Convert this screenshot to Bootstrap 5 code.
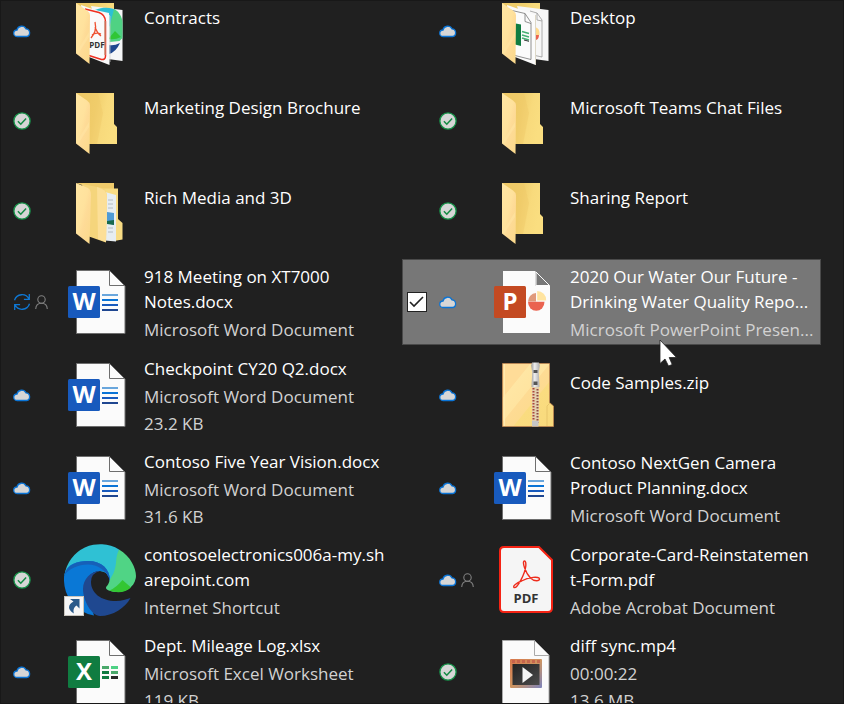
<!DOCTYPE html>
<html lang="en" data-bs-theme="dark">
<head>
<meta charset="utf-8">
<meta name="viewport" content="width=device-width, initial-scale=1">
<title>Files</title>
<link href="https://cdn.jsdelivr.net/npm/bootstrap@5.3.0/dist/css/bootstrap.min.css" rel="stylesheet">
<style>
  body { background: #202020; color: #fff; font-family: "Open Sans", "Noto Sans", sans-serif; font-size: 17px; line-height: 25px; }
  .explorer { border: 1px solid #181818; }
  .tiles { display: grid; grid-template-columns: repeat(2, minmax(0, 1fr)); gap: 7px; margin: -12px 22px 0 -25px; }
  .tile { min-height: 86px; padding-right: 8px; border: 1px solid transparent; }
  .tile.folder { min-height: 83px; }
  .tile.tight { min-height: 84px; }
  .tile.selected { background: #777; border-color: #4a4a4a; }
  .pick { width: 36px; padding-left: 4px; flex-shrink: 0; }
  .pick .form-check-input { width: 20px; height: 20px; margin: 0; border: 1px solid #222; border-radius: 0; background-color: #fff; background-size: 20px 20px;
    background-image: url("data:image/svg+xml,%3csvg xmlns='http://www.w3.org/2000/svg' viewBox='0 0 20 20'%3e%3cpath fill='none' stroke='%23222' stroke-width='1.6' d='M3 10l4 4 9-9'/%3e%3c/svg%3e"); }
  .state { width: 51px; gap: 4px; flex-shrink: 0; }
  .thumb { width: 72px; height: 72px; }
  .label { padding: 2px 0 0 8px; min-height: 55px; }
  .meta { color: #d2d2d2; margin-top: 3px; }
  .meta + .meta { margin-top: 2px; }
  .pointer { left: 256px; top: 79px; z-index: 2; }
  .letter { font-size: 24px; font-weight: 700; fill: #fff; text-anchor: middle; }
  .stamp { font-size: 13px; font-weight: 700; fill: #333; text-anchor: middle; }
  .stamp-sm { font-size: 8px; font-weight: 700; fill: #333; text-anchor: middle; }
</style>
<script src="https://cdn.jsdelivr.net/npm/bootstrap@5.3.0/dist/js/bootstrap.bundle.min.js"></script>
</head>
<body>
<svg width="0" height="0" class="position-absolute" aria-hidden="true">
  <defs>
    <linearGradient id="gBack" x1="0" y1="0" x2="1" y2=".25"><stop offset="0" stop-color="#ecc866"/><stop offset=".5" stop-color="#f1cf6d"/><stop offset=".75" stop-color="#f8da7c"/><stop offset="1" stop-color="#fade80"/></linearGradient>
    <linearGradient id="gFlap" x1="0" y1="0" x2="1" y2="1"><stop offset="0" stop-color="#ffe6a2"/><stop offset=".45" stop-color="#ffe29d"/><stop offset=".6" stop-color="#fedb97"/><stop offset="1" stop-color="#fbd98a"/></linearGradient>
    <linearGradient id="gZip" x1="0" y1="0" x2="1" y2="1"><stop offset="0" stop-color="#ffdc98"/><stop offset=".27" stop-color="#ffdc98"/><stop offset=".28" stop-color="#ffe6a4"/><stop offset=".46" stop-color="#ffe4a0"/><stop offset=".47" stop-color="#fedb94"/><stop offset=".6" stop-color="#fddb90"/><stop offset=".61" stop-color="#fadc80"/><stop offset="1" stop-color="#f8da7c"/></linearGradient>
    <linearGradient id="gPull" x1="0" x2="1"><stop offset="0" stop-color="#999"/><stop offset=".4" stop-color="#eee"/><stop offset="1" stop-color="#aaa"/></linearGradient>
    <linearGradient id="gFilm" x1="0" y1="0" x2="1" y2="1"><stop offset="0" stop-color="#d8774c"/><stop offset=".5" stop-color="#cf9560"/><stop offset="1" stop-color="#7d84bd"/></linearGradient>
    <linearGradient id="gDark" x1="0" y1="0" x2="1" y2="1"><stop offset="0" stop-color="#222"/><stop offset="1" stop-color="#4b4b4b"/></linearGradient>
  </defs>
  <symbol id="cloud" viewBox="0 0 18 14"><path d="M4 12.500A3.250 3.250 0 0 1 4 6A4.800 4.800 0 0 1 13 4.900A3.850 3.850 0 0 1 13.600 12.500z" fill="#d6d6d6" stroke="#0a74d6" stroke-width="1.300"/></symbol>
  <symbol id="check" viewBox="0 0 18 18"><circle cx="9" cy="9" r="8.100" fill="#d6d6d6" stroke="#16954a" stroke-width="1.300"/><path d="M4.900 9.300l2.900 2.900 5.300-5.600" fill="none" stroke="#128a43" stroke-width="1.500"/></symbol>
  <symbol id="sync" viewBox="0 0 18 18"><path d="M1.500 7.200A7.800 7.800 0 0 1 16 6.200M16.300 1v5.400h-5.400M16.500 10.800A7.800 7.800 0 0 1 2 11.800M1.700 17v-5.400h5.400" fill="none" stroke="#0f78d4" stroke-width="1.300"/></symbol>
  <symbol id="person" viewBox="0 0 13 14"><circle cx="6.500" cy="4.500" r="3.700" fill="none" stroke="#808080" stroke-width="1.100"/><path d="M.7 14c.2-3.600 2.400-5.800 5.800-5.800s5.600 2.200 5.800 5.800" fill="none" stroke="#808080" stroke-width="1.100"/></symbol>
  <symbol id="page" viewBox="0 0 72 72"><path d="M12.500 4.500h33L61 20v47.500H12.500z" fill="#fbfbfb" stroke="#6e6e6e"/><path d="M45.500 4.500v15H61" fill="none" stroke="#6e6e6e"/></symbol>
  <symbol id="word" viewBox="0 0 72 72"><use href="#page"/><path d="M38 29h16" stroke="#69a6dc" stroke-width="2"/><path d="M38 34h16" stroke="#0a74d6" stroke-width="2"/><path d="M38 39h16" stroke="#185abd" stroke-width="2"/><path d="M38 44h16" stroke="#1f4690" stroke-width="2"/><rect x="4" y="20" width="32" height="32" rx="1.500" fill="#185abd"/></symbol>
  <symbol id="excel" viewBox="0 0 72 72"><use href="#page"/><path d="M38 31.500h7M47 36.500h7" stroke="#4aa96b" stroke-width="3"/><path d="M47 31.500h7" stroke="#4dd184" stroke-width="3"/><path d="M38 36.500h7M38 41.500h7" stroke="#107c41" stroke-width="3"/><path d="M47 41.500h7" stroke="#292929" stroke-width="3"/><rect x="4" y="20" width="32" height="32" rx="1.500" fill="#107c41"/></symbol>
  <symbol id="ppt" viewBox="0 0 72 72"><path d="M13 5h32.500v14.500H60V67H13z" fill="#fbfbfb"/><path d="M46 6v13.500h13.500z" fill="#777" stroke="#fbfbfb"/><path d="M46 35.500h-8a8.500 8.500 0 0 1 8-8.500z" fill="#e09a7c"/><path d="M38 35.800h16.500a8.200 9 0 0 1-16.500 0z" fill="#ea6350"/><path d="M47.200 34.500V25a9 9 0 0 1 9 9.500z" fill="#ffe4a0"/><rect x="4" y="20" width="32" height="32" rx="1.500" fill="#c44a22"/></symbol>
  <symbol id="backing" viewBox="0 0 72 72"><path d="M12 8h38v31l3 3v17H25z" fill="url(#gBack)"/></symbol>
  <symbol id="flap" viewBox="0 0 72 72"><path d="M12 8l11 7.500q3 2 3 5L25.500 69 12 58.500z" fill="url(#gFlap)"/><path d="M13 56l12-19v5L14 59z" fill="#ffe4a4" opacity=".6"/></symbol>
  <symbol id="folder" viewBox="0 0 72 72"><use href="#backing"/><path d="M14 8h20l5 20-6 31h-7V18z" fill="#edc765" opacity=".35"/><use href="#flap"/></symbol>
  <symbol id="contracts" viewBox="0 0 72 72"><use href="#backing"/>
    <path d="M27 11l31.500 4v51L44 64z" fill="#f5f6f7"/>
    <path d="M31 15c9-4 18-2 21 0l-3 12-4 5V18z" fill="#2cc0d6"/><path d="M50 14c5 2 8 8 8.500 13v16l-3 3-10 1V32z" fill="#4fd283"/><path d="M45 43l6-7 6 6q-6 3-12 2z" fill="#30c636"/><path d="M45 50q5 1 11-2-4 9-11 11z" fill="#1e488f"/>
    <path d="M17 10l28.500 10v50L25 62z" fill="#fafafa"/><path d="M46 21v46" stroke="#ccc" stroke-width=".7"/>
    <path d="M21 14l14 3.500q6 2 6.500 9V61q0 4-4 3.500L25 60.500" fill="none" stroke="#ef2f20" stroke-width="1.500"/><path d="M41 26v34" stroke="#c88b70" stroke-width="1.300"/>
    <path d="M31 27c2 8-1 12-4 16M31 32q2 6 6 9M28 40q4-3 9-1" fill="none" stroke="#ee5030" stroke-width="1.300"/><use href="#flap"/></symbol>
  <symbol id="desktop" viewBox="0 0 72 72"><use href="#backing"/>
    <path d="M27 11l31.500 4v51L44 64z" fill="#f7f7f7"/><path d="M40 16l7 2 5 7v37l-7-1.500M47 18v7l5 1" fill="none" stroke="#999" stroke-width=".8"/><path d="M45 32q5 1 4.500 8H45z" fill="#ffd98b"/><path d="M45 40h4q0 5-4 5z" fill="#ea6350"/>
    <path d="M17 10l28.500 10v50L25 62z" fill="#fbfbfb"/><path d="M45.500 20v50" stroke="#ddd8c8"/><path d="M20 15l15 3.500 6 9v37L25 60.500M35 18.500v8l6 2" fill="none" stroke="#777" stroke-width=".8"/><path d="M23 28l8 1.500V51l-8-2z" fill="#107c41"/><path d="M32 36.500l7 2M32 40l7 2M32 43l7 2" stroke="#45b073" stroke-width="1.600"/><path d="M34 45l5 1.300" stroke="#333"/><use href="#flap"/></symbol>
  <symbol id="media" viewBox="0 0 72 72"><path d="M12 8h38v6H30z" fill="#f0cb6b"/><path d="M34 13.500h20V44l4.500 4v16.500L50 66V25z" fill="#f8dc84"/><path d="M41 17l11 3v46.500l-11-1z" fill="#e6edf2"/><path d="M44 25h5M44 29h5M44 33h5M44 53h5M44 57h5" stroke="#aeb7bd" stroke-width=".9"/><path d="M43 37l7 1v12l-7-2z" fill="#4f9bd6"/><path d="M43 46l7-1v5l-7-1z" fill="#18694d"/>
    <path d="M18 9l20 4q5 2 5 9l-1 45.500-17-6z" fill="#f5d57c"/><path d="M33 12l5 2q5 2 5 9l-1 44-8-3z" fill="#fcdf97"/><path d="M12 8l12 5q3 2 3 7l-1.500 49L12 58.500z" fill="url(#gFlap)"/></symbol>
  <symbol id="zip" viewBox="0 0 72 72"><path d="M12.500 4.500h47v39l4 3.500v20.500h-51z" fill="url(#gZip)" stroke="#c98a52" stroke-width=".7"/><path d="M14.500 5v62" stroke="#ffe9b0"/><path d="M57 67V47l3-3" fill="none" stroke="#e3c067" stroke-width=".8"/>
    <path d="M42 28h7v36h-7z" fill="#e2cfae"/><path d="M43.500 29v34" stroke="#a94438" stroke-width="2" stroke-dasharray="1.500 1.500"/><path d="M47.500 30v34" stroke="#8f4b43" stroke-width="2" stroke-dasharray="1.500 1.500"/>
    <path d="M42 3.500h7l.8 3-1 7 .7 14.500h-8l.7-14.500-1-7z" fill="url(#gPull)"/><path d="M43.500 11h4v3h-4zM43.500 22.500h4V26h-4z" fill="#555"/><path d="M42 62h6.500v5.500H42z" fill="#c6c6c6"/></symbol>
  <symbol id="edge" viewBox="0 0 72 72"><path d="M.5 31A36 36 0 0 1 55 5.500L54 26 46 37Q44 27 36 27L18 20z" fill="#2fc1d4"/>
    <path d="M55 5.500C68 13 73 27 71.800 34 70 44 61 48 53 48c-5 0-11-2-11-4 0-2 3-3 3.500-8 3.500-5 5.500-9 6.500-17 .5-6 1-9 3-13.500z" fill="#50d485"/><path d="M45.500 46.500q7-3 13-10.500l8.500 7.500c-5 5-14 6-21.500 3z" fill="#33c633"/>
    <path d="M0 35C0 19 15 17 24 17c14 0 22 8 22 20-1-7-5-10-10-10-10 0-14 9-14 17l8 27.500A36 36 0 0 1 0 35z" fill="#0a78d6"/><path d="M.5 31C3 20 14 17 24 17c14 0 22 8 22 20C43 26 33 20.500 24 20.500 14 20.500 5 25 .5 31z" fill="#1660b8"/>
    <path d="M36 27q-9 2-9 11c0 11 10 19 25 19 6 0 10-2 14.500-3C61 64 49 72 36 72c-8 0-17-15-17-27 0-10 8-18 17-18z" fill="#1f4890"/>
    <rect x=".5" y="52.500" width="19" height="19" fill="#f6f6f6" stroke="#c8c4bc"/><path d="M6 55h9.500v9.500l-3-3c-3 2-3.500 5-2.500 8-7-4-6-9-.5-12z" fill="#2a5a8a"/></symbol>
  <symbol id="pdf" viewBox="0 0 72 72"><path d="M14 3h35l13 13v48q0 4-4 4H14q-4 0-4-4V7q0-4 4-4z" fill="#f5f5f5" stroke="#f52314" stroke-width="2"/>
    <path d="M34.500 17c-3 0 1 12 6 17 4 4 9 3 9 1 0-3-11-2-18 2-5 2-9 5-7.500 6.500C27 45 35 30 35.800 22c.3-3-.2-5-1.300-5z" fill="none" stroke="#ee2c1c" stroke-width="1.400"/></symbol>
  <symbol id="video" viewBox="0 0 72 72"><path d="M12.500 4.500h32L59 19v48.500H12.500z" fill="#fbfbfb" stroke="#aaa"/><path d="M44.500 4.500V19.500H59" fill="none" stroke="#aaa"/><rect x="20" y="23" width="32" height="29" rx="1" fill="url(#gFilm)"/><path d="M22 25.500h29" stroke="#c2584a" stroke-width="3" stroke-dasharray="3 2" opacity=".7"/><rect x="22.500" y="28" width="27" height="21" fill="url(#gDark)"/><path d="M32.500 31l10.500 8-10.500 8z" fill="#f5f5f5"/></symbol>
</svg>

<main class="explorer vh-100 overflow-hidden">
<ul class="tiles list-unstyled">
  <li class="tile folder d-flex align-items-center"><div class="pick"></div><div class="state d-flex align-items-center"><svg width="18" height="14"><use href="#cloud"/></svg></div><svg class="thumb flex-shrink-0"><use href="#contracts"/><text class="stamp-sm" x="33" y="53">PDF</text></svg><div class="label text-nowrap"><div>Contracts</div></div></li>
  <li class="tile folder d-flex align-items-center"><div class="pick"></div><div class="state d-flex align-items-center"><svg width="18" height="14"><use href="#cloud"/></svg></div><svg class="thumb flex-shrink-0"><use href="#desktop"/></svg><div class="label text-nowrap"><div>Desktop</div></div></li>
  <li class="tile folder d-flex align-items-center"><div class="pick"></div><div class="state d-flex align-items-center"><svg width="18" height="18"><use href="#check"/></svg></div><svg class="thumb flex-shrink-0"><use href="#folder"/></svg><div class="label text-nowrap"><div>Marketing Design Brochure</div></div></li>
  <li class="tile folder d-flex align-items-center"><div class="pick"></div><div class="state d-flex align-items-center"><svg width="18" height="18"><use href="#check"/></svg></div><svg class="thumb flex-shrink-0"><use href="#folder"/></svg><div class="label text-nowrap"><div>Microsoft Teams Chat Files</div></div></li>
  <li class="tile folder d-flex align-items-center"><div class="pick"></div><div class="state d-flex align-items-center"><svg width="18" height="18"><use href="#check"/></svg></div><svg class="thumb flex-shrink-0"><use href="#media"/></svg><div class="label text-nowrap"><div>Rich Media and 3D</div></div></li>
  <li class="tile folder d-flex align-items-center"><div class="pick"></div><div class="state d-flex align-items-center"><svg width="18" height="18"><use href="#check"/></svg></div><svg class="thumb flex-shrink-0"><use href="#folder"/></svg><div class="label text-nowrap"><div>Sharing Report</div></div></li>

  <li class="tile d-flex align-items-center"><div class="pick"></div><div class="state d-flex align-items-center"><svg width="18" height="18"><use href="#sync"/></svg><svg width="13" height="14"><use href="#person"/></svg></div><svg class="thumb flex-shrink-0"><use href="#word"/><text class="letter" x="20" y="44">W</text></svg><div class="label text-nowrap"><div>918 Meeting on XT7000<br>Notes.docx</div><div class="meta">Microsoft Word Document</div></div></li>
  <li class="tile selected d-flex align-items-center position-relative"><div class="pick d-flex"><input class="form-check-input" type="checkbox" checked aria-label="Select 2020 Our Water Our Future"></div><div class="state d-flex align-items-center"><svg width="18" height="14"><use href="#cloud"/></svg></div><svg class="thumb flex-shrink-0"><use href="#ppt"/><text class="letter" x="20" y="44">P</text></svg><div class="label text-nowrap"><div>2020 Our Water Our Future -<br>Drinking Water Quality Repo...</div><div class="meta">Microsoft PowerPoint Presen...</div></div>
    <svg class="pointer position-absolute" width="19" height="28" viewBox="-1 -1 19 28" aria-hidden="true"><path d="M0 0v23.500l5-4.500 3.500 7 3.700-1.500-3-7h7.300z" fill="#fff" stroke="#222" stroke-width=".8"/></svg></li>
  <li class="tile d-flex align-items-center"><div class="pick"></div><div class="state d-flex align-items-center"><svg width="18" height="14"><use href="#cloud"/></svg></div><svg class="thumb flex-shrink-0"><use href="#word"/><text class="letter" x="20" y="44">W</text></svg><div class="label text-nowrap"><div>Checkpoint CY20 Q2.docx</div><div class="meta">Microsoft Word Document</div><div class="meta">23.2 KB</div></div></li>
  <li class="tile d-flex align-items-center"><div class="pick"></div><div class="state d-flex align-items-center"><svg width="18" height="14"><use href="#cloud"/></svg></div><svg class="thumb flex-shrink-0"><use href="#zip"/></svg><div class="label text-nowrap"><div>Code Samples.zip</div></div></li>
  <li class="tile d-flex align-items-center"><div class="pick"></div><div class="state d-flex align-items-center"><svg width="18" height="14"><use href="#cloud"/></svg></div><svg class="thumb flex-shrink-0"><use href="#word"/><text class="letter" x="20" y="44">W</text></svg><div class="label text-nowrap"><div>Contoso Five Year Vision.docx</div><div class="meta">Microsoft Word Document</div><div class="meta">31.6 KB</div></div></li>
  <li class="tile d-flex align-items-center"><div class="pick"></div><div class="state d-flex align-items-center"><svg width="18" height="14"><use href="#cloud"/></svg></div><svg class="thumb flex-shrink-0"><use href="#word"/><text class="letter" x="20" y="44">W</text></svg><div class="label text-nowrap"><div>Contoso NextGen Camera<br>Product Planning.docx</div><div class="meta">Microsoft Word Document</div></div></li>
  <li class="tile tight d-flex align-items-center"><div class="pick"></div><div class="state d-flex align-items-center"><svg width="18" height="18"><use href="#check"/></svg></div><svg class="thumb flex-shrink-0"><use href="#edge"/></svg><div class="label text-nowrap"><div>contosoelectronics006a-my.sh<br>arepoint.com</div><div class="meta">Internet Shortcut</div></div></li>
  <li class="tile tight d-flex align-items-center"><div class="pick"></div><div class="state d-flex align-items-center"><svg width="18" height="14"><use href="#cloud"/></svg><svg width="13" height="14"><use href="#person"/></svg></div><svg class="thumb flex-shrink-0"><use href="#pdf"/><text class="stamp" x="36" y="59">PDF</text></svg><div class="label text-nowrap"><div>Corporate-Card-Reinstatemen<br>t-Form.pdf</div><div class="meta">Adobe Acrobat Document</div></div></li>
  <li class="tile d-flex align-items-center"><div class="pick"></div><div class="state d-flex align-items-center"><svg width="18" height="14"><use href="#cloud"/></svg></div><svg class="thumb flex-shrink-0"><use href="#excel"/><text class="letter" x="20" y="44">X</text></svg><div class="label text-nowrap"><div>Dept. Mileage Log.xlsx</div><div class="meta">Microsoft Excel Worksheet</div><div class="meta">119 KB</div></div></li>
  <li class="tile d-flex align-items-center"><div class="pick"></div><div class="state d-flex align-items-center"><svg width="18" height="18"><use href="#check"/></svg></div><svg class="thumb flex-shrink-0"><use href="#video"/></svg><div class="label text-nowrap"><div>diff sync.mp4</div><div class="meta">00:00:22</div><div class="meta">13.6 MB</div></div></li>
</ul>
</main>
</body>
</html>
